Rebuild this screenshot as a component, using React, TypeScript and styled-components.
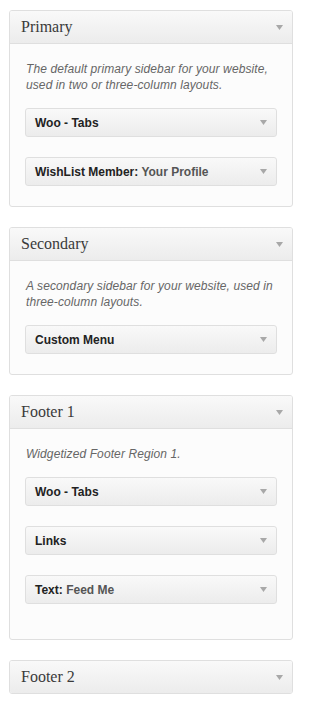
import React from "react";
import styled, { createGlobalStyle } from "styled-components";

const Global = createGlobalStyle`
  html, body { margin: 0; padding: 0; background: #fff; }
  body { font-family: "Liberation Sans", Arial, sans-serif; }
`;

const Page = styled.div`
  padding: 10px 0 0 9px;
  display: flex;
  flex-direction: column;
  gap: 20px;
  width: 284px;
`;

const Panel = styled.section`
  box-sizing: border-box;
  width: 284px;
  border: 1px solid #dfdfdf;
  border-radius: 3px;
  background: #fcfcfc;
  overflow: hidden;
`;

const Header = styled.div<{ $open: boolean }>`
  display: flex;
  align-items: center;
  justify-content: space-between;
  height: 32px;
  padding: 0 9px 0 11px;
  background: linear-gradient(to bottom, #f9f9f9, #ececec);
  border-bottom: ${(p) => (p.$open ? "1px solid #dfdfdf" : "none")};
`;

const Title = styled.h3`
  margin: 0;
  font-family: "Liberation Serif", "Times New Roman", serif;
  font-weight: normal;
  font-size: 16px;
  color: #3a3a3a;
  line-height: 32px;
`;

const Body = styled.div<{ $extra: number }>`
  padding: 17px 15px ${(p) => 20 + p.$extra}px 15px;
  display: flex;
  flex-direction: column;
  gap: 20px;
`;

const Description = styled.p`
  margin: 0 0 -5px 0;
  padding-left: 1px;
  font-family: "Liberation Sans", Arial, sans-serif;
  font-style: italic;
  font-size: 12px;
  letter-spacing: 0.1px;
  line-height: 16px;
  color: #666;
`;

const Widget = styled.div`
  box-sizing: border-box;
  height: 29px;
  display: flex;
  align-items: center;
  justify-content: space-between;
  padding: 0 9px 0 9px;
  border: 1px solid #dfdfdf;
  border-radius: 3px;
  background: linear-gradient(to bottom, #f9f9f9, #ececec);
`;

const WidgetTitle = styled.span`
  font-size: 12px;
  font-weight: bold;
  color: #222;
`;

const WidgetSub = styled.span`
  color: #555;
`;

const Arrow = () => (
  <svg width="7" height="5" viewBox="0 0 7 5" aria-hidden="true">
    <polygon points="0,0 7,0 3.5,5" fill="#a8a8a8" />
  </svg>
);

type W = { name: string; sub?: string };
type S = { title: string; desc?: string; widgets: W[]; open: boolean; extra?: number };

const sidebars: S[] = [
  {
    title: "Primary",
    desc: "The default primary sidebar for your website, used in two or three-column layouts.",
    widgets: [{ name: "Woo - Tabs" }, { name: "WishList Member", sub: "Your Profile" }],
    open: true,
  },
  {
    title: "Secondary",
    desc: "A secondary sidebar for your website, used in three-column layouts.",
    widgets: [{ name: "Custom Menu" }],
    open: true,
  },
  {
    title: "Footer 1",
    desc: "Widgetized Footer Region 1.",
    widgets: [{ name: "Woo - Tabs" }, { name: "Links" }, { name: "Text", sub: "Feed Me" }],
    open: true,
    extra: 15,
  },
  { title: "Footer 2", widgets: [], open: false },
];

export default function App() {
  return (
    <>
      <Global />
      <Page>
        {sidebars.map((s) => (
          <Panel key={s.title}>
            <Header $open={s.open}>
              <Title>{s.title}</Title>
              <Arrow />
            </Header>
            {s.open && (
              <Body $extra={s.extra ?? 0}>
                {s.desc && <Description>{s.desc}</Description>}
                {s.widgets.map((w, i) => (
                  <Widget key={i}>
                    <WidgetTitle>
                      {w.name}
                      {w.sub && (
                        <>
                          : <WidgetSub>{w.sub}</WidgetSub>
                        </>
                      )}
                    </WidgetTitle>
                    <Arrow />
                  </Widget>
                ))}
              </Body>
            )}
          </Panel>
        ))}
      </Page>
    </>
  );
}
